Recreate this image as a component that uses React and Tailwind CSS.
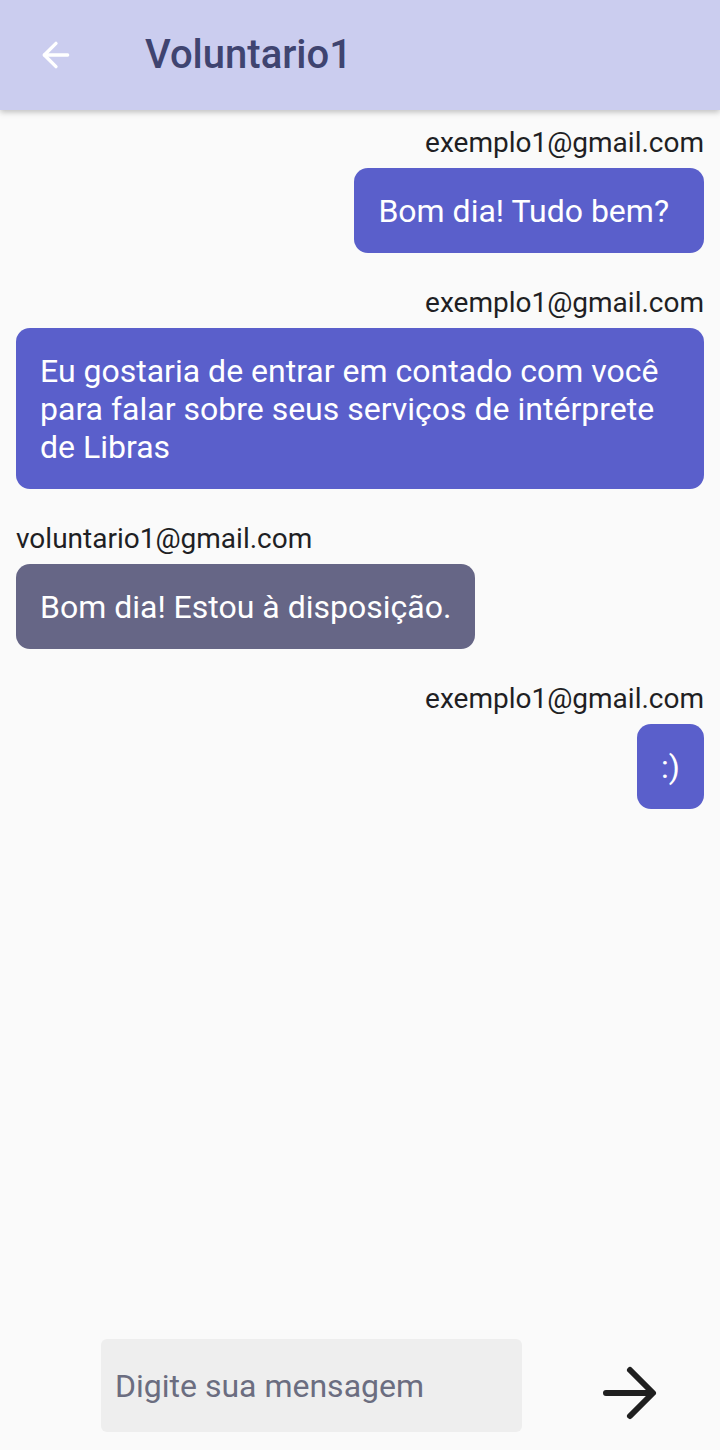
import { ArrowLeft } from "lucide-react";

const messages = [
  { id: 1, from: "exemplo1@gmail.com", text: "Bom dia! Tudo bem?", mine: true, wide: true },
  {
    id: 2,
    from: "exemplo1@gmail.com",
    text: "Eu gostaria de entrar em contado com você para falar sobre seus serviços de intérprete de Libras",
    mine: true,
  },
  { id: 3, from: "voluntario1@gmail.com", text: "Bom dia! Estou à disposição.", mine: false },
  { id: 4, from: "exemplo1@gmail.com", text: ":)", mine: true },
];

function Message({ message }) {
  return (
    <div
      className={`flex flex-col px-4 ${
        message.mine ? "items-end" : "items-start"
      }`}
    >
      <span className="text-[28px] leading-[30px] text-[#1f1f24]">
        {message.from}
      </span>
      <div
        className={`mt-[10px] rounded-[14px] pl-6 pt-6 pb-[23px] text-[32px] leading-[38px] text-white ${
          message.wide ? "pr-[35px]" : "pr-6"
        } ${message.mine ? "bg-[#5a5fcb]" : "bg-[#666686]"}`}
      >
        {message.text}
      </div>
    </div>
  );
}

export default function App() {
  return (
    <div className="flex h-[1450px] flex-col bg-[#fafafa] font-['Roboto',sans-serif]">
      {/* Header */}
      <header className="z-10 flex h-[110px] shrink-0 items-center bg-[#cbcdef] shadow-[0_2px_6px_rgba(0,0,0,0.25)]">
        <div className="flex w-[112px] justify-center">
          <ArrowLeft size={40} strokeWidth={2} className="text-white" />
        </div>
        <h1 className="ml-[33px] text-[40px] font-medium text-[#3f4470]">
          Voluntario1
        </h1>
      </header>

      {/* Messages */}
      <div className="flex flex-1 flex-col gap-[35px] pt-[18px]">
        {messages.map((m) => (
          <Message key={m.id} message={m} />
        ))}
      </div>

      {/* Input */}
      <div className="flex items-center pb-[18px] pl-[101px]">
        <div className="flex h-[93px] w-[421px] items-center rounded-[6px] bg-[#eeeeee] px-[14px]">
          <span className="text-[32px] text-[#6b6d80]">Digite sua mensagem</span>
        </div>
        <div className="ml-[78px] mt-[14px] flex items-center">
          <svg width="60" height="56" viewBox="0 0 60 56" fill="none">
            <path
              d="M6 28h46M30 5l23 23-23 23"
              stroke="#1f1f1f"
              strokeWidth="6"
              strokeLinecap="round"
              strokeLinejoin="round"
            />
          </svg>
        </div>
      </div>
    </div>
  );
}
